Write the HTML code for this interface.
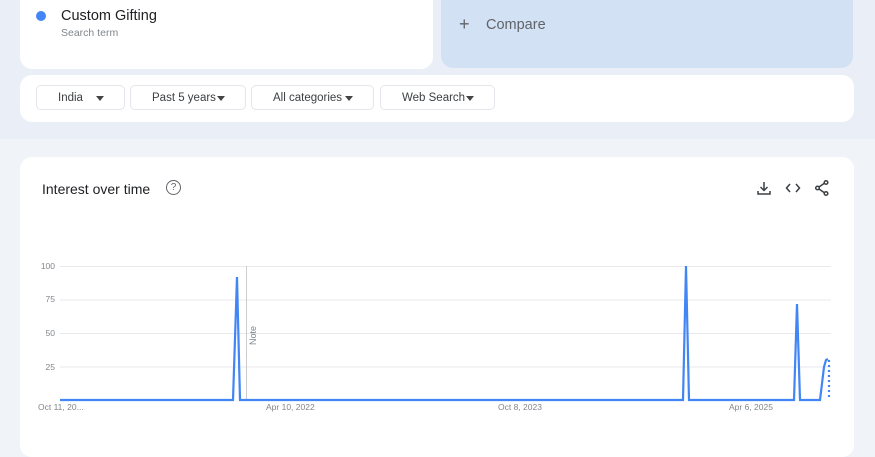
<!DOCTYPE html><html><head><style>
body{margin:0;width:875px;height:438px;overflow:hidden;font-family:"Liberation Sans",sans-serif;background:#f0f4f9;position:relative}
.top{position:absolute;left:0;top:0;width:875px;height:139px;background:#e9eef7}
.c{position:absolute;background:#fff;border-radius:12px}
.dd{position:absolute;top:85px;height:25px;border:1px solid #e3e6ea;border-radius:5px;font-size:11.5px;color:#3c4043;line-height:25px;box-sizing:border-box;padding-left:21px}
.dd:after{content:"";position:absolute;top:10px;border-left:4px solid transparent;border-right:4px solid transparent;border-top:5px solid #444;right:20px}
</style></head><body>
<div class="top"></div>
<div class="c" style="left:20px;top:-20px;width:413px;height:89px"></div>
<div style="position:absolute;left:36px;top:11px;width:10px;height:10px;border-radius:50%;background:#4285f4"></div>
<div style="position:absolute;left:61px;top:8px;font-size:14.5px;color:#202124">Custom Gifting</div>
<div style="position:absolute;left:61px;top:27px;font-size:10.5px;color:#80868b">Search term</div>
<div style="position:absolute;left:441px;top:-20px;width:412px;height:88px;background:#d3e1f5;border-radius:12px"></div>
<div style="position:absolute;left:459px;top:14px;font-size:18px;color:#5f6368">+</div>
<div style="position:absolute;left:486px;top:17px;font-size:14.5px;color:#5f6368">Compare</div>
<div class="c" style="left:20px;top:75px;width:834px;height:47px"></div>
<div class="dd" style="left:36px;width:89px">India</div>
<div class="dd" style="left:130px;width:116px">Past 5 years</div>
<div class="dd" style="left:251px;width:123px">All categories</div>
<div class="dd" style="left:380px;width:115px">Web Search</div>
<div class="c" style="left:20px;top:157px;width:834px;height:300px"></div>
<div style="position:absolute;left:42px;top:181px;font-size:14px;color:#202124">Interest over time</div>
<div style="position:absolute;left:166px;top:180px;width:13px;height:13px;border:1.5px solid #5f6368;border-radius:50%;font-size:10px;line-height:13px;text-align:center;color:#5f6368">?</div>
<svg style="position:absolute;left:0;top:0" width="875" height="438">
<g stroke="#3c4043" stroke-width="1.5" fill="none">
<path d="M764 182v8M760.5 187l3.5 3.5 3.5-3.5M758 191v3h12v-3"/>
<path d="M790 184l-3.5 4 3.5 4M796 184l3.5 4-3.5 4"/>
<circle cx="826" cy="182.5" r="1.8"/><circle cx="817.5" cy="188" r="1.8"/><circle cx="826" cy="193.5" r="1.8"/><path d="M824 183.5l-5 3.5M819 189l5 3.5"/>
</g>
<g stroke="#e8eaed" stroke-width="1"><path d="M60 266.5H831M60 300H831M60 333.5H831M60 367H831"/></g>
<path d="M246.5 266V400" stroke="#ccc"/>
<text transform="translate(256,345) rotate(-90)" font-size="9" fill="#80868b" font-family="Liberation Sans">Note</text>
<g font-size="8.5" fill="#80868b" font-family="Liberation Sans"><text x="55" y="269" text-anchor="end">100</text><text x="55" y="302" text-anchor="end">75</text><text x="55" y="336" text-anchor="end">50</text><text x="55" y="370" text-anchor="end">25</text>
<text x="38" y="410">Oct 11, 20...</text><text x="266" y="410">Apr 10, 2022</text><text x="498" y="410">Oct 8, 2023</text><text x="729" y="410">Apr 6, 2025</text></g>
<path d="M60 400H233L237 277L240 400H683L686 266L689 400H794L797 304L800 400H820L824 367L826 360L828 359" stroke="#4285f4" stroke-width="2.2" fill="none"/>
<path d="M829 360V400" stroke="#4285f4" stroke-width="2.2" stroke-dasharray="2 3"/>
</svg>
</body></html>
